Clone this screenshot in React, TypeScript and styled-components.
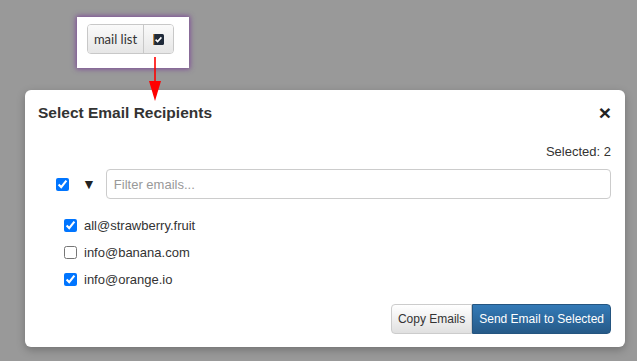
import * as React from 'react';
import styled, { createGlobalStyle } from 'styled-components';

const emails = [
  { address: 'all@strawberry.fruit', checked: true },
  { address: 'info@banana.com', checked: false },
  { address: 'info@orange.io', checked: true },
];

const App: React.FC = () => {
  return (
    <Page>
      <GlobalStyle />
      <Trigger>
        <BtnGroup>
          <GroupButton>mail list</GroupButton>
          <GroupButton $icon>
            <svg width="11" height="11" viewBox="0 0 11 11">
              <rect x="0" y="0" width="11" height="11" rx="1.5" fill="#1f2a3a" />
              <rect x="0" y="0" width="1.2" height="11" fill="#c98a3c" />
              <path d="M2.6 5.6 L4.6 7.5 L8.4 3.4" stroke="#fff" strokeWidth="1.6" fill="none" />
            </svg>
          </GroupButton>
        </BtnGroup>
      </Trigger>

      <Arrow width="14" height="46" viewBox="0 0 14 46">
        <line x1="7" y1="0" x2="7" y2="26" stroke="#ff0000" strokeWidth="1.6" />
        <polygon points="1,24 13,24 7,44" fill="#ff0000" />
      </Arrow>

      <Modal>
        <Header>
          <Title>Select Email Recipients</Title>
          <Close>×</Close>
        </Header>
        <Body>
          <Count>Selected: 2</Count>
          <FilterRow>
            <Check type="checkbox" defaultChecked />
            <Caret>▼</Caret>
            <Filter placeholder="Filter emails..." />
          </FilterRow>
          <List>
            {emails.map((e) => (
              <Item key={e.address}>
                <Check type="checkbox" defaultChecked={e.checked} />
                <span>{e.address}</span>
              </Item>
            ))}
          </List>
        </Body>
        <Footer>
          <FooterButton>Copy Emails</FooterButton>
          <FooterButton $primary>Send Email to Selected</FooterButton>
        </Footer>
      </Modal>
    </Page>
  );
};

const GlobalStyle = createGlobalStyle`
  html, body {
    margin: 0;
    padding: 0;
    background: #999999;
    font-family: "Liberation Sans", Arial, sans-serif;
    overflow: hidden;
  }
`;

const Page = styled.div`
  position: relative;
  width: 637px;
  height: 361px;
  padding: 17px 0 0 25px;
  box-sizing: border-box;
`;

const Trigger = styled.div`
  margin-left: 52px;
  width: 112px;
  height: 51px;
  box-sizing: border-box;
  padding: 7px 0 0 10px;
  background: #fff;
  box-shadow: 0 0 5px 1px rgba(120, 60, 150, 0.85);
`;

const BtnGroup = styled.div`
  display: inline-flex;
  height: 30px;
  border: 1px solid #c8c8c8;
  border-radius: 4px;
  overflow: hidden;
  box-sizing: border-box;
`;

const GroupButton = styled.div<{ $icon?: boolean }>`
  display: flex;
  align-items: center;
  justify-content: center;
  width: ${(p) => (p.$icon ? '29px' : '55px')};
  font-family: Lato, "Open Sans", sans-serif;
  font-size: 13px;
  color: #333;
  background: linear-gradient(#fafafa, #e6e6e6);
  border-left: ${(p) => (p.$icon ? '1px solid #c8c8c8' : 'none')};
`;

const Arrow = styled.svg`
  position: absolute;
  left: 148px;
  top: 57px;
  z-index: 2;
`;

const Modal = styled.div`
  margin-top: 22px;
  width: 600px;
  height: 257px;
  background: #fff;
  border-radius: 6px;
  box-shadow: 0 3px 8px rgba(0, 0, 0, 0.25);
  display: flex;
  flex-direction: column;
`;

const Header = styled.div`
  display: flex;
  align-items: center;
  justify-content: space-between;
  height: 46px;
  padding: 0 14px 0 13px;
`;

const Title = styled.h4`
  margin: 0;
  font-size: 15.5px;
  font-weight: bold;
  color: #333;
`;

const Close = styled.span`
  font-size: 21px;
  font-weight: bold;
  color: #222;
  line-height: 1;
  margin-top: -2px;
`;

const Body = styled.div`
  flex: 1;
  padding: 8px 14px 0 31px;
`;

const Count = styled.div`
  text-align: right;
  font-size: 13px;
  color: #333;
  height: 16px;
`;

const FilterRow = styled.div`
  display: flex;
  align-items: center;
  margin-top: 9px;
`;

const Check = styled.input`
  width: 13px;
  height: 13px;
  margin: 0;
  accent-color: #0075ff;
`;

const Caret = styled.span`
  font-size: 14px;
  color: #222;
  margin: 0 10px 0 13px;
`;

const Filter = styled.input`
  flex: 1;
  height: 30px;
  box-sizing: border-box;
  border: 1px solid #ccc;
  border-radius: 4px;
  padding: 0 7px;
  font-family: "Liberation Sans", Arial, sans-serif;
  font-size: 13px;
  &::placeholder {
    color: #999;
  }
`;

const List = styled.div`
  display: flex;
  flex-direction: column;
  gap: 14px;
  margin-top: 20px;
  padding-left: 8px;
`;

const Item = styled.label`
  display: flex;
  align-items: center;
  gap: 7px;
  height: 13px;
  font-size: 13px;
  color: #333;
`;

const Footer = styled.div`
  display: flex;
  justify-content: flex-end;
  padding: 0 14px 13px 0;
`;

const FooterButton = styled.div<{ $primary?: boolean }>`
  display: flex;
  align-items: center;
  height: 30px;
  box-sizing: border-box;
  padding: 0 6px;
  font-size: 12px;
  color: ${(p) => (p.$primary ? '#fff' : '#333')};
  background: ${(p) =>
    p.$primary ? 'linear-gradient(#337ab7, #265a88)' : 'linear-gradient(#fff, #e0e0e0)'};
  border: 1px solid ${(p) => (p.$primary ? '#245580' : '#ccc')};
  border-radius: ${(p) => (p.$primary ? '0 4px 4px 0' : '4px 0 0 4px')};
`;

export default App;
